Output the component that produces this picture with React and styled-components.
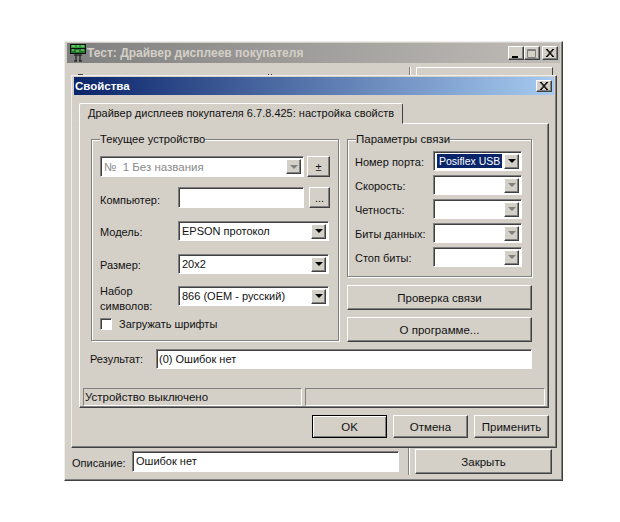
import React from 'react';
import styled, { createGlobalStyle, css } from 'styled-components';

const GlobalStyle = createGlobalStyle`
    html, body { margin: 0; padding: 0; background: #fff; }
    * { box-sizing: border-box; }
    #root { width: 620px; height: 522px; position: relative; overflow: hidden; }
`;

const FACE = '#d4d0c8';

const raised = css`
    background: ${FACE};
    border: 1px solid;
    border-color: #fff #404040 #404040 #fff;
    box-shadow: inset -1px -1px 0 #808080;
`;

const sunken = css`
    background: #fff;
    border: 1px solid;
    border-color: #808080 #fff #fff #808080;
    box-shadow: inset 1px 1px 0 #404040;
`;

const Desktop = styled.div`
    width: 620px;
    height: 522px;
    font-family: "Liberation Sans", Arial, sans-serif;
    font-size: 11px;
    color: #111;
`;

const Window = styled.div`
    position: absolute;
    left: 64px;
    top: 41px;
    width: 499px;
    height: 440px;
    padding: 1px 2px 0;
    background: ${FACE};
    border: 1px solid;
    border-color: #eee #404040 #404040 #eee;
    box-shadow: inset -1px -1px 0 #808080;
    display: flex;
    flex-direction: column;
`;

const Dialog = styled.div`
    position: absolute;
    left: 71px;
    top: 75px;
    width: 486px;
    height: 373px;
    padding: 1px 2px 0;
    background: ${FACE};
    border: 1px solid;
    border-color: #eee #404040 #404040 #eee;
    box-shadow: inset -1px -1px 0 #808080;
`;

const TitleBar = styled.div`
    height: ${props => props.small ? '18px' : '20px'};
    display: flex;
    align-items: center;
    padding: 0 2px 0 ${props => props.small ? '1px' : '2px'};
    font-size: ${props => props.small ? '11.5px' : '12px'};
    font-weight: 700;
    color: ${props => props.small ? '#fff' : '#d4d0c8'};
    background: ${props => props.small
        ? 'linear-gradient(90deg, #0a246a, #a6caf0)'
        : 'linear-gradient(90deg, #808080, #c0bdb8)'};
`;

const TitleText = styled.span`
    flex: 1;
`;

const CaptionButtons = styled.div`
    display: flex;
`;

const CaptionButton = styled.div`
    ${raised}
    width: 16px;
    height: ${props => props.small ? '12px' : '14px'};
    margin-left: ${props => props.gap ? '2px' : '0'};
    display: flex;
    align-items: center;
    justify-content: center;
    svg { display: block; }
`;

const BehindRow = styled.div`
    height: 12px;
    margin-top: 4px;
    display: flex;
    padding-right: 7px;
`;

const BehindMark = styled.div`
    height: 1px;
    width: ${props => props.width};
    margin: 7px 0 0 ${props => props.ml};
    background: #404040;
`;

const BehindRule = styled.div`
    width: 2px;
    height: 12px;
    margin: 0 5px 0 auto;
    background: linear-gradient(90deg, #808080 50%, #fff 50%);
`;

const BehindButton = styled.div`
    width: 137px;
    height: 12px;
    border-top: 1px solid #fff;
    border-left: 1px solid #fff;
    border-right: 1px solid #404040;
`;

const WindowFooter = styled.div`
    margin-top: auto;
    height: 33px;
    display: flex;
    align-items: center;
    padding: 1px 7px 5px 5px;
`;

const FooterLabel = styled.span`
    width: 60px;
    padding-top: 2px;
`;

const FooterInput = styled.div`
    ${sunken}
    width: 267px;
    height: 21px;
    padding: 3px 3px;
`;

const FooterRule = styled.div`
    width: 2px;
    height: 27px;
    margin: 0 5px 0 9px;
    background: linear-gradient(90deg, #808080 50%, #fff 50%);
`;

const TabStrip = styled.div`
    display: flex;
    padding: 8px 0 0 5px;
`;

const Tab = styled.div`
    width: 324px;
    height: 21px;
    padding: 3px 0 0 8px;
    background: ${FACE};
    border: 1px solid;
    border-color: #fff #404040 transparent #fff;
    border-radius: 2px 2px 0 0;
    margin-bottom: -1px;
    position: relative;
    white-space: nowrap;
`;

const Panel = styled.div`
    ${raised}
    margin-left: 5px;
    width: 470px;
    height: 285px;
    padding: 9px 11px 0 11px;
`;

const Columns = styled.div`
    display: flex;
    gap: 8px;
    align-items: flex-start;
`;

const Group = styled.fieldset`
    margin: 0;
    min-width: 0;
    flex: none;
    border: 1px solid #808080;
    box-shadow: 1px 1px 0 #fff, inset 1px 1px 0 #fff;
    width: ${props => props.width};
    height: ${props => props.height};
    padding: 0;
`;

const Legend = styled.legend`
    margin-left: 8px;
    padding: 0;
    font-size: ${props => props.size};
    background: ${FACE};
`;

const DeviceBody = styled.div`
    padding: 11px 8px 0 8px;
    display: flex;
    flex-direction: column;
`;

const DeviceRow = styled.div`
    display: flex;
    align-items: center;
    gap: 3px;
    height: ${props => props.h || '20px'};
    margin-top: ${props => props.mt || '0'};
`;

const FieldLabel = styled.span`
    width: ${props => props.width || '75px'};
    flex: none;
    line-height: 15px;
    padding-top: ${props => props.low ? '6px' : '2px'};
`;

const Combo = styled.div`
    ${sunken}
    width: ${props => props.width};
    height: ${props => props.h || '20px'};
    flex: none;
    display: flex;
    align-items: center;
    padding: 2px 2px 2px 3px;
    font-size: ${props => props.disabled ? '11.5px' : '11px'};
    color: ${props => props.disabled ? '#8a8a8a' : '#111'};
`;

const ComboText = styled.span`
    flex: 1;
    white-space: pre;
    ${props => props.selected && css`
        align-self: stretch;
        background: #0a246a;
        color: #fff;
        font-size: 10.5px;
        margin-right: 2px;
        padding: 1px 0 0 2px;
        line-height: 13px;
    `}
`;

const ArrowButton = styled.div`
    ${raised}
    width: 15px;
    height: 15px;
    flex: none;
    display: flex;
    align-items: center;
    justify-content: center;
    &::after {
        content: '';
        border: 4px solid transparent;
        border-bottom-width: 0;
        border-top-color: ${props => props.disabled ? '#808080' : '#000'};
    }
`;

const SideButton = styled.button`
    ${raised}
    width: ${props => props.width};
    height: 21px;
    padding: 0;
    font: inherit;
    color: #111;
    margin-left: ${props => props.ml || '0'};
`;

const CheckRow = styled.label`
    display: flex;
    align-items: center;
    gap: 7px;
    margin-top: 12px;
`;

const CheckBox = styled.span`
    ${sunken}
    width: 12px;
    height: 12px;
`;

const RightColumn = styled.div`
    width: 185px;
    display: flex;
    flex-direction: column;
`;

const PortBody = styled.div`
    padding: 6px 9px 0 7px;
    display: flex;
    flex-direction: column;
    gap: 4px;
`;

const PortRow = styled.div`
    display: flex;
    align-items: center;
`;

const WideButton = styled.button`
    ${raised}
    width: 185px;
    height: 25px;
    margin-top: ${props => props.mt};
    padding: 0;
    font-family: inherit;
    font-size: 11.5px;
    color: #111;
`;

const ResultRow = styled.div`
    display: flex;
    align-items: center;
    margin-top: 7px;
`;

const ResultLabel = styled.span`
    width: 66px;
    margin-left: -1px;
`;

const ResultInput = styled.div`
    ${sunken}
    width: 376px;
    height: 20px;
    padding: 3px 2px;
`;

const StatusBar = styled.div`
    display: flex;
    gap: 3px;
    margin: 19px 0 0 -8px;
`;

const StatusCell = styled.div`
    width: ${props => props.width};
    height: 18px;
    flex: none;
    padding: 2px 1px;
    border: 1px solid;
    border-color: #808080 #fff #fff #808080;
    font-size: 11.5px;
    white-space: nowrap;
`;

const DialogButtons = styled.div`
    display: flex;
    justify-content: flex-end;
    gap: 6px;
    padding: 7px 5px 0 0;
`;

const DialogButton = styled.button`
    ${raised}
    width: 75px;
    height: 23px;
    padding: 0;
    font-family: inherit;
    font-size: 11.5px;
    color: #111;
    ${props => props.primary && css`
        border-color: #000;
        box-shadow: inset 1px 1px 0 #fff, inset -1px -1px 0 #808080;
    `}
`;

const FooterButton = styled(DialogButton)`
    width: 137px;
    height: 25px;
`;

function MonitorIcon() {
    return (
        <svg width="18" height="18" viewBox="0 0 18 18" style={{ flex: 'none' }}>
            <rect x="1" y="0" width="16" height="10" fill="#101010" />
            <rect x="2" y="1" width="14" height="3" fill="#2f9a3a" />
            <rect x="2" y="5" width="14" height="4" fill="#1f7a2c" />
            <path d="M3 2h3M8 2h2M12 2h3M3 6h2M7 7h3M12 6h3" stroke="#9fe08a" strokeWidth="1" />
            <path d="M5 11h8M7 11v6M11 11v6M5 17h3M10 17h3" stroke="#101010" strokeWidth="1" fill="none" />
        </svg>
    );
}

function CloseGlyph() {
    return (
        <svg width="10" height="8" viewBox="0 0 10 8">
            <path d="M1 0l7 8M2 0l7 8M8 0L1 8M9 0L2 8" stroke="#000" strokeWidth="1" fill="none" />
        </svg>
    );
}

function MinGlyph() {
    return (
        <svg width="10" height="9" viewBox="0 0 10 9">
            <rect x="1" y="7" width="6" height="2" fill="#000" />
        </svg>
    );
}

function MaxGlyph() {
    return (
        <svg width="10" height="9" viewBox="0 0 10 9">
            <path d="M.5 .5h8v8h-8zM.5 1.5h8" stroke="#808080" fill="none" />
        </svg>
    );
}

function ComboBox({ width, h, value, selected, disabled, arrowDisabled }) {
    return (
        <Combo width={width} h={h} disabled={disabled}>
            <ComboText selected={selected}>{value}</ComboText>
            <ArrowButton disabled={arrowDisabled} />
        </Combo>
    );
}

const portFields = [
    { label: 'Номер порта:', value: 'Posiflex USB', selected: true },
    { label: 'Скорость:' },
    { label: 'Четность:' },
    { label: 'Биты данных:' },
    { label: 'Стоп биты:' },
];

export default function App() {
    return (
        <Desktop>
            <GlobalStyle />
            <Window>
                <TitleBar>
                    <MonitorIcon />
                    <TitleText>Тест: Драйвер дисплеев покупателя</TitleText>
                    <CaptionButtons>
                        <CaptionButton><MinGlyph /></CaptionButton>
                        <CaptionButton><MaxGlyph /></CaptionButton>
                        <CaptionButton gap><CloseGlyph /></CaptionButton>
                    </CaptionButtons>
                </TitleBar>
                <BehindRow>
                    <BehindMark ml="11px" width="5px" />
                    <BehindMark ml="185px" width="1px" />
                    <BehindMark ml="2px" width="1px" />
                    <BehindRule />
                    <BehindButton />
                </BehindRow>
                <WindowFooter>
                    <FooterLabel>Описание:</FooterLabel>
                    <FooterInput>Ошибок нет</FooterInput>
                    <FooterRule />
                    <FooterButton>Закрыть</FooterButton>
                </WindowFooter>
            </Window>
            <Dialog>
                <TitleBar small>
                    <TitleText>Свойства</TitleText>
                    <CaptionButton small><CloseGlyph /></CaptionButton>
                </TitleBar>
                <TabStrip>
                    <Tab>Драйвер дисплеев покупателя 6.7.8.425: настройка свойств</Tab>
                </TabStrip>
                <Panel>
                    <Columns>
                        <Group width="248px" height="208px">
                            <Legend size="11.2px">Текущее устройство</Legend>
                            <DeviceBody>
                                <DeviceRow h="21px">
                                    <ComboBox width="204px" h="21px" value="№  1 Без названия" disabled arrowDisabled />
                                    <SideButton width="23px">±</SideButton>
                                </DeviceRow>
                                <DeviceRow h="21px" mt="10px">
                                    <FieldLabel low>Компьютер:</FieldLabel>
                                    <Combo width="126px" h="21px" />
                                    <SideButton width="21px" ml="2px">...</SideButton>
                                </DeviceRow>
                                <DeviceRow mt="13px">
                                    <FieldLabel>Модель:</FieldLabel>
                                    <ComboBox width="151px" value="EPSON протокол" />
                                </DeviceRow>
                                <DeviceRow mt="13px">
                                    <FieldLabel>Размер:</FieldLabel>
                                    <ComboBox width="151px" value="20x2" />
                                </DeviceRow>
                                <DeviceRow mt="12px">
                                    <FieldLabel low>Набор<br />символов:</FieldLabel>
                                    <ComboBox width="151px" value="866 (OEM - русский)" />
                                </DeviceRow>
                                <CheckRow>
                                    <CheckBox />
                                    Загружать шрифты
                                </CheckRow>
                            </DeviceBody>
                        </Group>
                        <RightColumn>
                            <Group width="185px" height="144px">
                                <Legend size="11.5px">Параметры связи</Legend>
                                <PortBody>
                                    {portFields.map(f => (
                                        <PortRow key={f.label}>
                                            <FieldLabel width="78px">{f.label}</FieldLabel>
                                            <ComboBox
                                                width="89px"
                                                value={f.value}
                                                selected={f.selected}
                                                arrowDisabled={!f.selected}
                                            />
                                        </PortRow>
                                    ))}
                                </PortBody>
                            </Group>
                            <WideButton mt="8px">Проверка связи</WideButton>
                            <WideButton mt="7px">О программе...</WideButton>
                        </RightColumn>
                    </Columns>
                    <ResultRow>
                        <ResultLabel>Результат:</ResultLabel>
                        <ResultInput>(0) Ошибок нет</ResultInput>
                    </ResultRow>
                    <StatusBar>
                        <StatusCell width="219px">Устройство выключено</StatusCell>
                        <StatusCell width="240px" />
                    </StatusBar>
                </Panel>
                <DialogButtons>
                    <DialogButton primary>OK</DialogButton>
                    <DialogButton>Отмена</DialogButton>
                    <DialogButton>Применить</DialogButton>
                </DialogButtons>
            </Dialog>
        </Desktop>
    );
}
